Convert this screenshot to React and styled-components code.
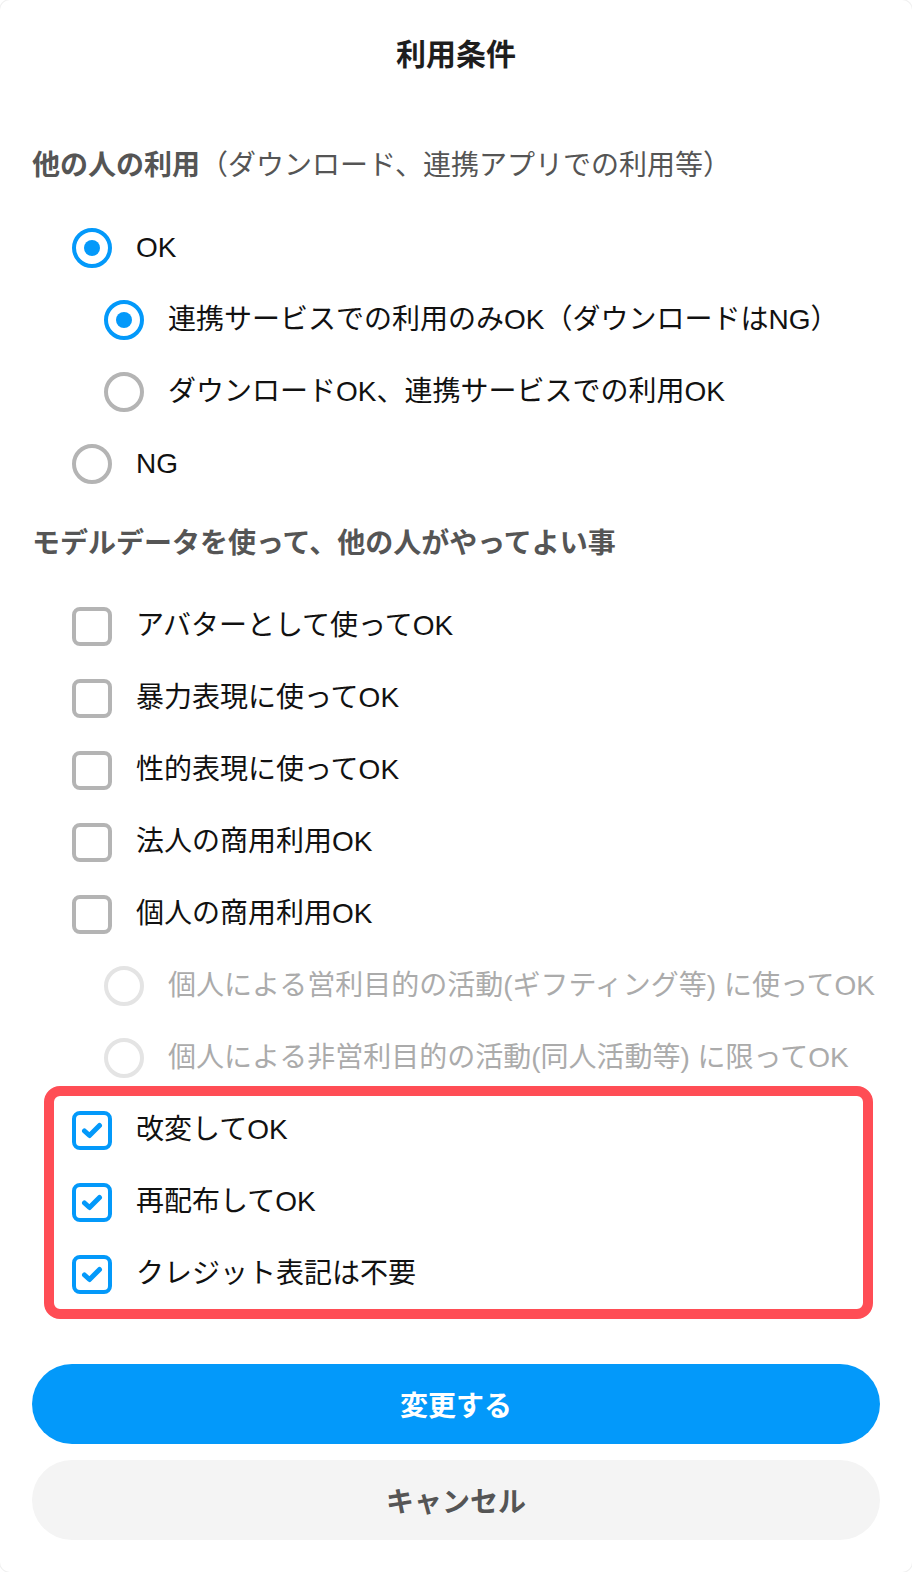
import styled, { createGlobalStyle } from 'styled-components'

const GlobalStyle = createGlobalStyle`
  html, body {
    margin: 0;
    padding: 0;
    background: #ffffff;
  }
  body {
    font-family: "Liberation Sans", "Noto Sans CJK JP", sans-serif;
    -webkit-font-smoothing: antialiased;
  }
`

const Sheet = styled.div`
  background: #FFFFFF;
  border-radius: 10px;
  box-shadow: 0 0 0 1px rgba(0, 0, 0, 0.06);
  box-sizing: border-box;
  min-height: 1572px;
  padding: 35px 32px 32px;
  width: 912px;
`

const Title = styled.h2`
  color: #1e1e1e;
  font-size: 30px;
  font-weight: bold;
  line-height: 40px;
  margin: 0 0 71px;
  text-align: center;
`

const SectionHeading = styled.h3`
  color: #555555;
  font-size: 28px;
  font-weight: bold;
  line-height: 40px;
  margin: ${props => props.$first ? '0' : '24px'} 0 26px;

  & > span {
    font-weight: normal;
  }
`

const OptionList = styled.div`
  display: flex;
  flex-direction: column;
`

const Row = styled.div`
  align-items: center;
  display: flex;
  gap: 24px;
  height: 72px;
  padding-left: ${props => props.$indent}px;
`

const Label = styled.span`
  color: ${props => props.$disabled ? '#ababab' : '#111111'};
  font-size: 28px;
  line-height: 40px;
  white-space: nowrap;
`

const RadioMark = styled.span`
  border: 4px solid ${props => props.$checked ? '#0399fa' : props.$disabled ? '#e4e4e4' : '#b4b4b4'};
  border-radius: 50%;
  box-sizing: border-box;
  display: block;
  flex: 0 0 auto;
  height: 40px;
  position: relative;
  width: 40px;

  &:after {
    background: #0399fa;
    border-radius: 50%;
    content: '';
    display: ${props => props.$checked ? 'block' : 'none'};
    height: 16px;
    left: 8px;
    position: absolute;
    top: 8px;
    width: 16px;
  }
`

const BoxMark = styled.span`
  align-items: center;
  border: 4px solid ${props => props.$checked ? '#0399fa' : '#b4b4b4'};
  border-radius: 8px;
  box-sizing: border-box;
  display: flex;
  flex: 0 0 auto;
  height: 39px;
  justify-content: center;
  width: 40px;
`

const Highlight = styled.div`
  display: flex;
  flex-direction: column;
  position: relative;

  &:after {
    border: 10px solid #ff4d55;
    border-radius: 16px;
    bottom: -9px;
    content: '';
    left: 12px;
    pointer-events: none;
    position: absolute;
    right: 7px;
    top: -8px;
  }
`

const Actions = styled.div`
  display: flex;
  flex-direction: column;
  gap: 16px;
  margin-top: 54px;
`

const Button = styled.button`
  background: ${props => props.$primary ? '#0399fa' : '#f4f4f4'};
  border: none;
  border-radius: 40px;
  color: ${props => props.$primary ? '#ffffff' : '#555555'};
  font-family: inherit;
  font-size: 28px;
  font-weight: bold;
  height: 80px;
  width: 100%;
`

const CheckIcon = () => (
  <svg width="22" height="17" viewBox="0 0 22 17">
    <path d="M3.5 9 L8.5 13.5 L18.5 3.5" fill="none" stroke="#0399fa" strokeWidth="5" strokeLinecap="round" strokeLinejoin="round" />
  </svg>
)

const RadioRow = ({ indent, checked, disabled, children }) => (
  <Row $indent={indent}>
    <RadioMark $checked={checked} $disabled={disabled} />
    <Label $disabled={disabled}>{children}</Label>
  </Row>
)

const CheckRow = ({ checked, children }) => (
  <Row $indent={40}>
    <BoxMark $checked={checked}>{checked && <CheckIcon />}</BoxMark>
    <Label>{children}</Label>
  </Row>
)

const usageOptions = [
  { label: 'OK', indent: 40, checked: true },
  { label: '連携サービスでの利用のみOK（ダウンロードはNG）', indent: 72, checked: true },
  { label: 'ダウンロードOK、連携サービスでの利用OK', indent: 72 },
  { label: 'NG', indent: 40 },
]

const permissions = [
  'アバターとして使ってOK',
  '暴力表現に使ってOK',
  '性的表現に使ってOK',
  '法人の商用利用OK',
  '個人の商用利用OK',
]

const personalUse = [
  '個人による営利目的の活動(ギフティング等) に使ってOK',
  '個人による非営利目的の活動(同人活動等) に限ってOK',
]

const granted = ['改変してOK', '再配布してOK', 'クレジット表記は不要']

export default function App() {
  return (
    <>
      <GlobalStyle />
      <Sheet>
        <Title>利用条件</Title>

        <SectionHeading $first>
          他の人の利用<span>（ダウンロード、連携アプリでの利用等）</span>
        </SectionHeading>
        <OptionList>
          {usageOptions.map(opt => (
            <RadioRow key={opt.label} indent={opt.indent} checked={opt.checked}>
              {opt.label}
            </RadioRow>
          ))}
        </OptionList>

        <SectionHeading>モデルデータを使って、他の人がやってよい事</SectionHeading>
        <OptionList>
          {permissions.map(label => (
            <CheckRow key={label}>{label}</CheckRow>
          ))}
          {personalUse.map(label => (
            <RadioRow key={label} indent={72} disabled>
              {label}
            </RadioRow>
          ))}
          <Highlight>
            {granted.map(label => (
              <CheckRow key={label} checked>{label}</CheckRow>
            ))}
          </Highlight>
        </OptionList>

        <Actions>
          <Button $primary>変更する</Button>
          <Button>キャンセル</Button>
        </Actions>
      </Sheet>
    </>
  )
}
